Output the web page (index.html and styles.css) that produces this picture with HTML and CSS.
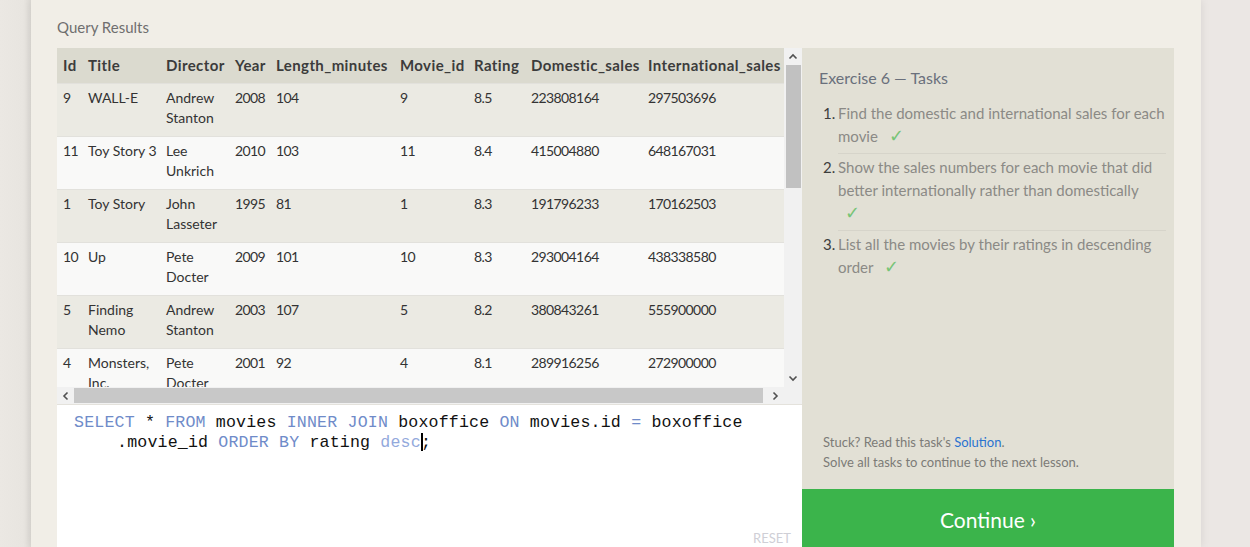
FILE: index.html
```html
<!DOCTYPE html>
<html lang="en">
<head>
<meta charset="utf-8">
<title>Query Results</title>
<link rel="stylesheet" href="styles.css">
</head>
<body>
<div class="page">
  <div class="card">
    <div class="results-label">Query Results</div>
    <div class="workspace">
      <div class="left">
        <div class="results">
          <div class="table-view">
            <table class="results-table">
              <colgroup>
                <col class="c-id"><col class="c-title"><col class="c-dir"><col class="c-year"><col class="c-len"><col class="c-mid"><col class="c-rat"><col class="c-dom"><col class="c-int">
              </colgroup>
              <thead>
                <tr><th>Id</th><th>Title</th><th>Director</th><th>Year</th><th>Length_minutes</th><th>Movie_id</th><th>Rating</th><th>Domestic_sales</th><th>International_sales</th></tr>
              </thead>
              <tbody>
                <tr><td>9</td><td>WALL-E</td><td>Andrew Stanton</td><td>2008</td><td>104</td><td>9</td><td>8.5</td><td>223808164</td><td>297503696</td></tr>
                <tr><td>11</td><td>Toy Story 3</td><td>Lee Unkrich</td><td>2010</td><td>103</td><td>11</td><td>8.4</td><td>415004880</td><td>648167031</td></tr>
                <tr><td>1</td><td>Toy Story</td><td>John Lasseter</td><td>1995</td><td>81</td><td>1</td><td>8.3</td><td>191796233</td><td>170162503</td></tr>
                <tr><td>10</td><td>Up</td><td>Pete Docter</td><td>2009</td><td>101</td><td>10</td><td>8.3</td><td>293004164</td><td>438338580</td></tr>
                <tr><td>5</td><td>Finding Nemo</td><td>Andrew Stanton</td><td>2003</td><td>107</td><td>5</td><td>8.2</td><td>380843261</td><td>555900000</td></tr>
                <tr><td>4</td><td>Monsters, Inc.</td><td>Pete Docter</td><td>2001</td><td>92</td><td>4</td><td>8.1</td><td>289916256</td><td>272900000</td></tr>
                <tr><td>7</td><td>Ratatouille</td><td>Brad Bird</td><td>2007</td><td>115</td><td>7</td><td>8.0</td><td>206445654</td><td>417277164</td></tr>
              </tbody>
            </table>
          </div>
          <div class="vbar">
            <span class="arrow">
              <svg width="10" height="7" viewBox="0 0 10 7"><path d="M1.5 5.5 L5 2 L8.5 5.5" fill="none" stroke="#505050" stroke-width="1.6"/></svg>
            </span>
            <div class="vtrack"><div class="vthumb"></div></div>
            <span class="arrow">
              <svg width="10" height="7" viewBox="0 0 10 7"><path d="M1.5 1.5 L5 5 L8.5 1.5" fill="none" stroke="#505050" stroke-width="1.6"/></svg>
            </span>
          </div>
          <div class="hbar">
            <span class="arrow">
              <svg width="7" height="10" viewBox="0 0 7 10"><path d="M5.5 1.5 L2 5 L5.5 8.5" fill="none" stroke="#505050" stroke-width="1.6"/></svg>
            </span>
            <div class="htrack"><div class="hthumb"></div></div>
            <span class="arrow">
              <svg width="7" height="10" viewBox="0 0 7 10"><path d="M1.5 1.5 L5 5 L1.5 8.5" fill="none" stroke="#505050" stroke-width="1.6"/></svg>
            </span>
          </div>
          <div class="corner"></div>
        </div>
        <div class="editor">
          <div class="code"><span class="kw">SELECT</span> * <span class="kw">FROM</span> movies <span class="kw">INNER</span> <span class="kw">JOIN</span> boxoffice <span class="kw">ON</span> movies.id <span class="kw">=</span> boxoffice</div>
          <div class="code wrap">.movie_id <span class="kw">ORDER</span> <span class="kw">BY</span> rating <span class="kw2">desc</span><span class="cursor"></span>;</div>
          <span class="reset">RESET</span>
        </div>
      </div>
      <div class="right">
        <div class="tasks-panel">
          <div class="tasks">
            <h2 class="tasks-title">Exercise 6 — Tasks</h2>
            <ol class="task-list">
              <li><span class="num">1.</span><span class="task-text">Find the domestic and international sales for each movie <span class="check">✓</span></span></li>
              <li><span class="num">2.</span><span class="task-text">Show the sales numbers for each movie that did better internationally rather than domestically <span class="check">✓</span></span></li>
              <li><span class="num">3.</span><span class="task-text">List all the movies by their ratings in descending order <span class="check">✓</span></span></li>
            </ol>
          </div>
          <div class="help">
            <p>Stuck? Read this task's <a class="link">Solution</a>.</p>
            <p>Solve all tasks to continue to the next lesson.</p>
          </div>
        </div>
        <div class="continue">Continue ›</div>
      </div>
    </div>
  </div>
</div>
</body>
</html>
```
FILE: styles.css
```css
html, body {
  margin: 0;
  padding: 0;
}
body {
  height: 547px;
  overflow: hidden;
  background: #ebe7e4;
  font-family: "Lato", "Open Sans", sans-serif;
  color: #333;
}
.page {
  display: flex;
  height: 547px;
  padding-left: 31px;
  background: linear-gradient(to right, #ebe8e3 0px, #e8e5e0 24px, #dedbd6 31px, #ebe7e4 31px);
}
.card {
  width: 1170px;
  height: 547px;
  background: #f1eee7;
  box-shadow: 0 0 9px rgba(0, 0, 0, 0.09);
  padding: 17px 0 0 26px;
  box-sizing: border-box;
}
.results-label {
  font-size: 15px;
  line-height: 20px;
  color: #6f6f6f;
  height: 31px;
}
.workspace {
  display: flex;
}
.left {
  width: 745px;
  display: flex;
  flex-direction: column;
}
.results {
  display: grid;
  grid-template-columns: 727px 18px;
  grid-template-rows: 339px 17px;
  border-bottom: 1px solid #e4e2dc;
}
.table-view {
  overflow: hidden;
  background: #f9f9f8;
}
.results-table {
  border-collapse: collapse;
  table-layout: fixed;
  width: 835px;
  font-size: 14px;
  line-height: 20px;
}
.c-id { width: 25px; }
.c-title { width: 78px; }
.c-dir { width: 69px; }
.c-year { width: 41px; }
.c-len { width: 124px; }
.c-mid { width: 74px; }
.c-rat { width: 57px; }
.c-dom { width: 117px; }
.c-int { width: 250px; }
.results-table th {
  background: #dbdacf;
  text-align: left;
  font-size: 15px;
  font-weight: 700;
  letter-spacing: 0.4px;
  color: #3c3c3c;
  padding: 7px 0 8px 6px;
  white-space: nowrap;
}
.results-table td {
  padding: 4px 0 8px 6px;
  vertical-align: top;
  color: #333;
  border-top: 1px solid #e2e1dc;
  height: 40px;
  box-sizing: content-box;
}
.results-table td:first-child,
.results-table td:nth-child(n+4) {
  letter-spacing: -0.6px;
}
.results-table tbody tr:nth-child(odd) td {
  background: #ebeae3;
}
.results-table tbody tr:nth-child(even) td {
  background: #f9f9f8;
}
.vbar {
  background: #f1f1f1;
  display: flex;
  flex-direction: column;
  align-items: center;
}
.vbar .arrow {
  height: 17px;
  display: flex;
  align-items: center;
  justify-content: center;
  width: 17px;
}
.vtrack {
  flex: 1;
  width: 100%;
  display: flex;
  justify-content: center;
}
.vthumb {
  width: 15px;
  height: 123px;
  background: #c1c1c1;
}
.hbar {
  background: #f1f1f1;
  display: flex;
  align-items: center;
}
.hbar .arrow {
  width: 17px;
  height: 17px;
  display: flex;
  align-items: center;
  justify-content: center;
}
.htrack {
  flex: 1;
  height: 100%;
  display: flex;
  align-items: center;
  padding-right: 4px;
}
.hthumb {
  width: 100%;
  height: 15px;
  background: #c8c8c8;
}
.corner {
  background: #f1f1f1;
}
.editor {
  position: relative;
  background: #ffffff;
  height: 150px;
  padding: 8px 0 0 17px;
  box-sizing: border-box;
}
.code {
  font-family: "Liberation Mono", "Courier New", monospace;
  font-size: 16.6px;
  letter-spacing: 0.17px;
  line-height: 20px;
  color: #111;
  white-space: pre;
}
.code.wrap {
  padding-left: 43px;
}
.kw {
  color: #6f8bc9;
}
.kw2 {
  color: #93a9dc;
}
.cursor {
  display: inline-block;
  width: 2px;
  height: 18px;
  background: #000;
  vertical-align: -4px;
  margin-right: -2px;
}
.reset {
  position: absolute;
  right: 11px;
  top: 125px;
  font-size: 13px;
  line-height: 16px;
  color: #cfcfd6;
}
.right {
  width: 372px;
  display: flex;
  flex-direction: column;
}
.tasks-panel {
  background: #e2e0d5;
  height: 441px;
  box-sizing: border-box;
  padding: 20px 8px 17px 17px;
  display: flex;
  flex-direction: column;
  justify-content: space-between;
}
.tasks-title {
  margin: 0 0 14px 0;
  font-size: 16px;
  line-height: 20px;
  font-weight: 400;
  color: #6a707c;
}
.task-list {
  list-style: none;
  margin: 0;
  padding: 0 0 0 4px;
}
.task-list li {
  display: flex;
  font-size: 15px;
  line-height: 23px;
  color: #8b8a86;
}
.task-list li + li .task-text {
  border-top: 1px solid #d6d4ca;
  padding-top: 2px;
}
.task-list li .task-text {
  padding-bottom: 5px;
  flex: 1;
}
.task-list li + li .num {
  padding-top: 3px;
}
.num {
  color: #3d3d3d;
  width: 15px;
  flex: none;
}
.check {
  display: inline-block;
  color: #77c477;
  font-size: 18px;
  line-height: 20px;
  padding: 0 10px 0 7px;
}
.help {
  padding-left: 4px;
}
.help p {
  margin: 0;
  font-size: 13px;
  line-height: 20px;
  color: #7c7b77;
}
.link {
  color: #2a73d0;
}
.continue {
  background: #3bb44b;
  height: 61px;
  display: flex;
  align-items: center;
  justify-content: center;
  color: #ffffff;
  font-size: 21px;
}
```
